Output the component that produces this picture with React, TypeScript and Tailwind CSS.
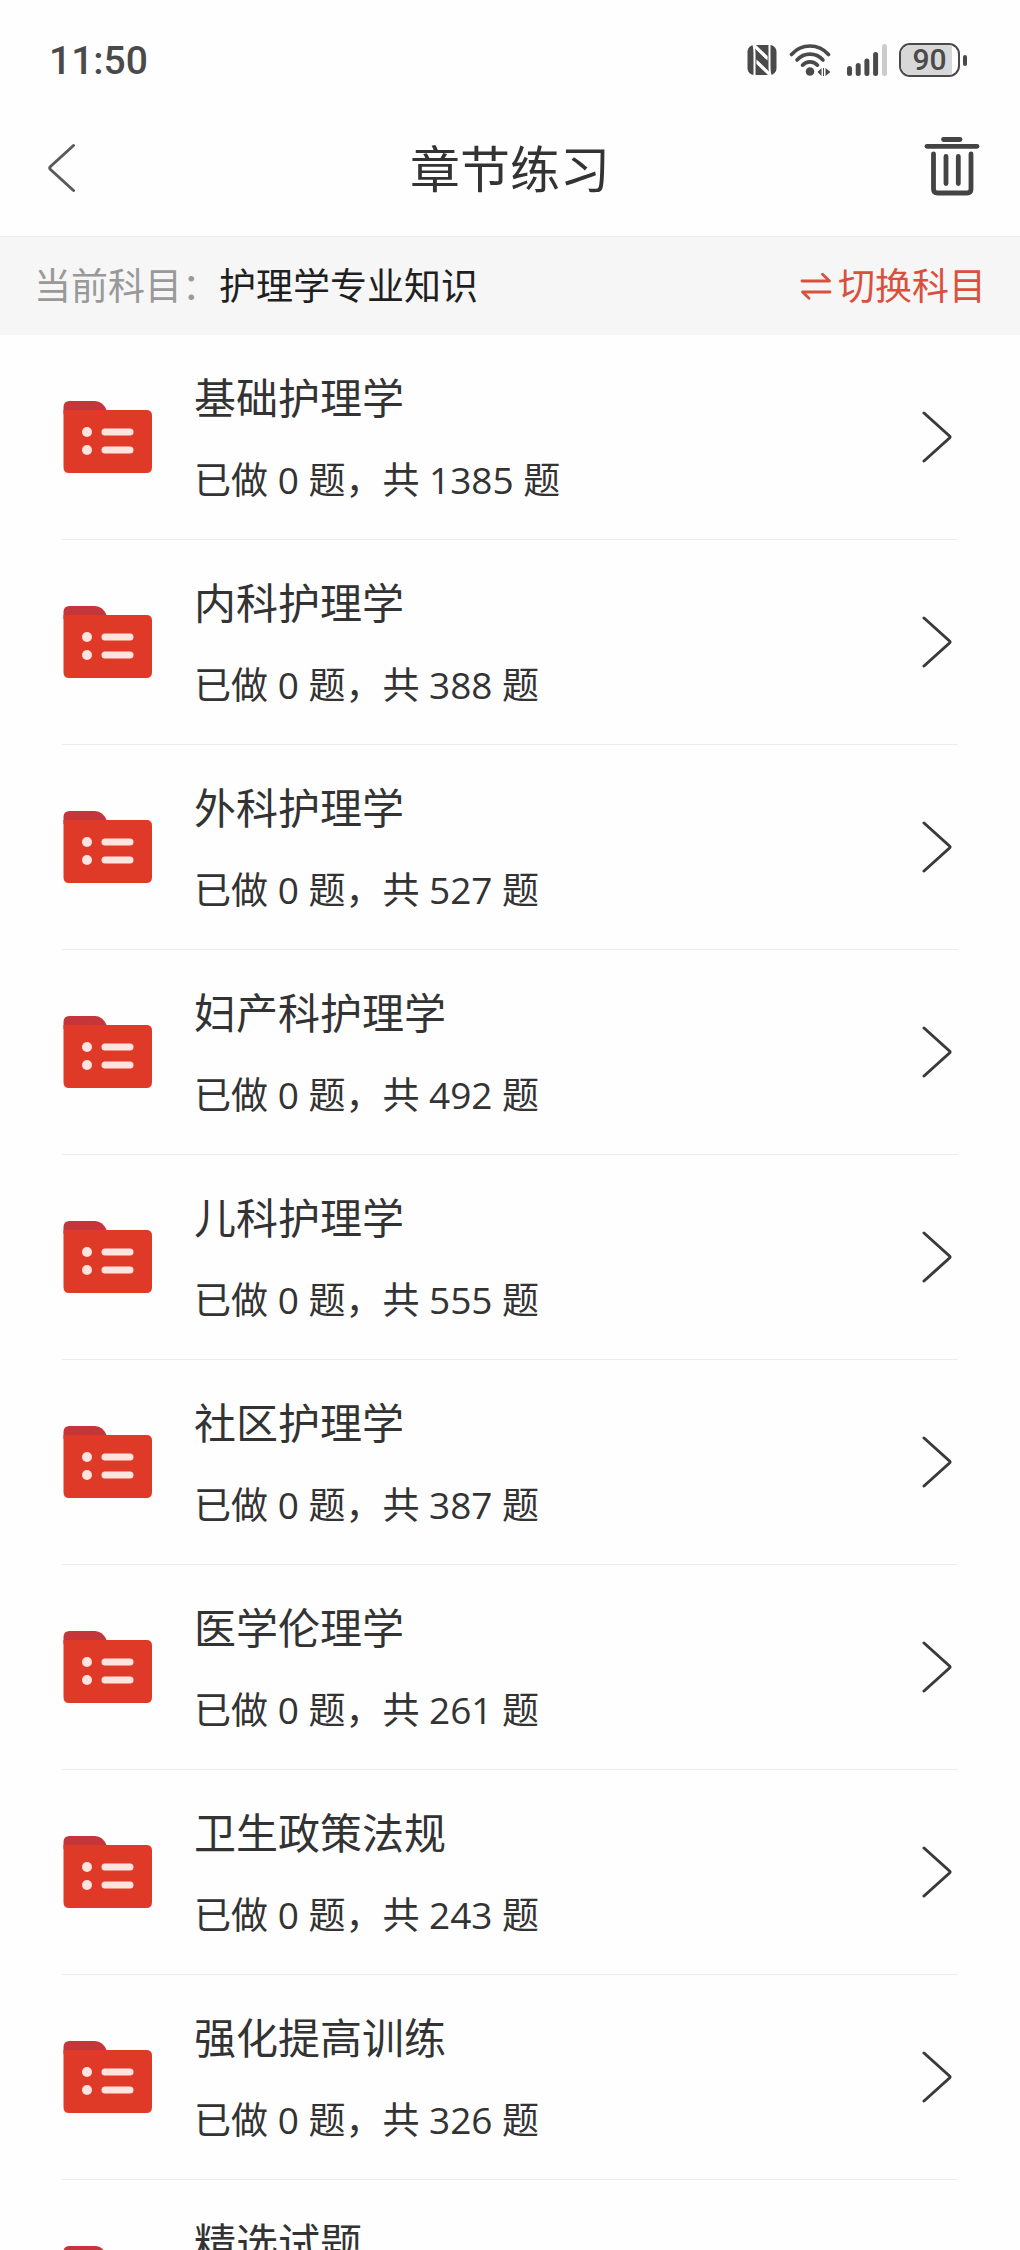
import { useState } from "react";

interface Chapter {
  id: number;
  name: string;
  done: number;
  total: number;
}

const chapters: Chapter[] = [
  { id: 1, name: "基础护理学", done: 0, total: 1385 },
  { id: 2, name: "内科护理学", done: 0, total: 388 },
  { id: 3, name: "外科护理学", done: 0, total: 527 },
  { id: 4, name: "妇产科护理学", done: 0, total: 492 },
  { id: 5, name: "儿科护理学", done: 0, total: 555 },
  { id: 6, name: "社区护理学", done: 0, total: 387 },
  { id: 7, name: "医学伦理学", done: 0, total: 261 },
  { id: 8, name: "卫生政策法规", done: 0, total: 243 },
  { id: 9, name: "强化提高训练", done: 0, total: 326 },
  { id: 10, name: "精选试题", done: 0, total: 318 },
];

const NfcIcon = () => (
  <svg width="30" height="30" viewBox="0 0 30 30" aria-hidden="true">
    <rect x="0.5" y="0" width="29" height="30" rx="6.5" fill="#4a4a4a" />
    <path
      d="M7.5 30V10Q7.500 3 6.500 0L20 13.500M22.500 0V20Q22.500 27 23.500 30L10 16.500"
      fill="none"
      stroke="#fff"
      strokeWidth="2"
    />
    <path d="M6 0H9L20.500 11V15.500L9 4.500ZM24 30H21L9.500 19V14.500L21 25.500Z" fill="#fff" />
  </svg>
);

const WifiIcon = () => (
  <svg width="42" height="32" viewBox="0 0 42 32" aria-hidden="true">
    <g fill="none" stroke="#4a4a4a" strokeWidth="3.6" strokeLinecap="round">
      <path d="M2.5 10.5C12.5 -0.8 29.5 -0.8 39.5 10.5" />
      <path d="M8 16C15.2 8.2 26.8 8.2 34 16" />
      <path d="M13.5 21.2C17.5 16.8 24.5 16.8 28.5 21.2" />
    </g>
    <circle cx="21" cy="27.5" r="4.3" fill="#4a4a4a" />
    <path d="M28.5 28L32.5 24V32ZM34 24H35V32H34ZM36.500 24L41.500 28L36.500 32Z" fill="#4a4a4a" />
  </svg>
);

const SignalIcon = () => (
  <svg width="40" height="32" viewBox="0 0 40 32" aria-hidden="true">
    <g fill="#4a4a4a">
      <rect x="0" y="22" width="5" height="10" rx="2.5" />
      <rect x="8.7" y="19" width="5" height="13" rx="2.5" />
      <rect x="17.4" y="14.5" width="5" height="17.5" rx="2.5" />
      <rect x="26.1" y="8" width="5" height="24" rx="2.5" />
    </g>
    <rect x="35" y="0" width="5" height="32" rx="2.5" fill="#cbcbcb" />
  </svg>
);

const Battery = ({ level }: { level: number }) => (
  <div className="flex items-center gap-[3px]">
    <div className="relative flex h-[34px] w-[61px] items-center justify-center overflow-hidden rounded-[11px] border-2 border-[#4a4a4a]">
      <div
        className="absolute inset-y-0 left-0 bg-[#d8d8d8]"
        style={{ width: `${level}%` }}
      />
      <span className="relative font-[Roboto] text-[30px] leading-[30px] font-medium text-[#4a4a4a]">
        {level}
      </span>
    </div>
    <div className="h-[11px] w-1 rounded-full bg-[#4a4a4a]" />
  </div>
);

const BackIcon = () => (
  <svg width="28" height="50" viewBox="0 0 28 50" aria-hidden="true">
    <path
      d="M25.5 2.5L2.5 23.5Q1 25 2.5 26.5L25.5 47.5"
      fill="none"
      stroke="#5a5a5a"
      strokeWidth="3"
      strokeLinecap="round"
    />
  </svg>
);

const TrashIcon = () => (
  <svg width="56" height="66" viewBox="0 0 56 66" aria-hidden="true">
    <g fill="none" stroke="#444" strokeWidth="4.8" strokeLinecap="round">
      <path d="M19.5 4.5H36" />
      <path d="M3 11.3H53" />
      <path d="M9.5 19V54Q9.5 58 13.5 58H43Q47 58 47 54V19" />
      <path d="M22 21.500V48.500M34.3 21.500V48.500" />
    </g>
  </svg>
);

const SwapIcon = () => (
  <svg width="32" height="28" viewBox="0 0 32 28" aria-hidden="true">
    <path
      d="M2 9H29.5L22.5 2.2M30 20H2.5L9 26.2"
      fill="none"
      stroke="#d9513d"
      strokeWidth="2.8"
      strokeLinecap="round"
      strokeLinejoin="round"
    />
  </svg>
);

const FolderIcon = () => (
  <svg width="90" height="74" viewBox="0 0 90 74" aria-hidden="true">
    <path d="M1.5 14V7Q1.5 1 7.5 1H33Q41 1 45 11V14Z" fill="#c5363a" />
    <path d="M1.5 10H84.500Q90 10 90 15.500V67Q90 73 84.500 73H7Q1.5 73 1.5 67Z" fill="#df3a28" />
    <g fill="#ffe3df">
      <circle cx="25" cy="32" r="5" />
      <circle cx="25" cy="50" r="5" />
      <rect x="39.5" y="28.500" width="32" height="7" rx="3.500" />
      <rect x="39.5" y="46.500" width="32" height="7" rx="3.500" />
    </g>
  </svg>
);

const ArrowIcon = () => (
  <svg width="30" height="52" viewBox="0 0 30 52" aria-hidden="true">
    <path
      d="M2 2L27.5 25Q28.5 26 27.5 27L2 50"
      fill="none"
      stroke="#3a3a3a"
      strokeWidth="3"
      strokeLinecap="round"
    />
  </svg>
);

const App = () => {
  const [subject] = useState("护理学专业知识");

  return (
    <div className="flex h-screen flex-col bg-[#fefefe] font-['Open_Sans','Noto_Sans_CJK_SC',sans-serif] text-[#333]">

      {/* Status bar */}
      <div className="flex h-[100px] shrink-0 items-center justify-between pt-5 pr-[53px] pl-[49px]">
        <span className="pt-0.5 font-[Roboto] text-[39px] leading-[40px] font-medium text-[#4a4a4a]">
          11:50
        </span>
        <div className="flex items-center gap-3">
          <NfcIcon />
          <WifiIcon />
          <div className="pl-1">
            <SignalIcon />
          </div>
          <Battery level={90} />
        </div>
      </div>

      {/* Header */}
      <header className="grid h-[136px] shrink-0 grid-cols-[1fr_auto_1fr] items-center px-10">
        <button type="button" aria-label="返回" className="justify-self-start pl-2">
          <BackIcon />
        </button>
        <h1 className="pt-0.5 text-[50px] leading-[60px]">章节练习</h1>
        <button type="button" aria-label="清空" className="justify-self-end">
          <TrashIcon />
        </button>
      </header>

      {/* Current subject */}
      <div className="flex h-[99px] shrink-0 items-center justify-between border-t border-[#ebebeb] bg-[#f6f6f6] px-[34px] text-[37px] leading-[50px]">
        <p className="text-[#1f1f1f]">
          <span className="text-[#999]">当前科目：</span>
          {subject}
        </p>
        <button type="button" className="flex items-center gap-1.5 text-[#d9513d]">
          <SwapIcon />
          切换科目
        </button>
      </div>

      {/* Chapter list */}
      <ul className="min-h-0 flex-1 overflow-y-auto px-[62px] [scrollbar-width:none]">
        {chapters.map((chapter) => (
          <li key={chapter.id} className="border-b border-[#ececec]">
            <a href={`#chapter-${chapter.id}`} className="flex h-[204px] items-center pr-1.5">
              <FolderIcon />
              <div className="flex flex-1 flex-col gap-8 pt-1 pl-[42px]">
                <h2 className="text-[42px] leading-[50px]">{chapter.name}</h2>
                <p className="text-[37px] leading-[50px]">
                  已做 {chapter.done} 题，共 {chapter.total} 题
                </p>
              </div>
              <ArrowIcon />
            </a>
          </li>
        ))}
      </ul>

    </div>
  );
};

export default App;
